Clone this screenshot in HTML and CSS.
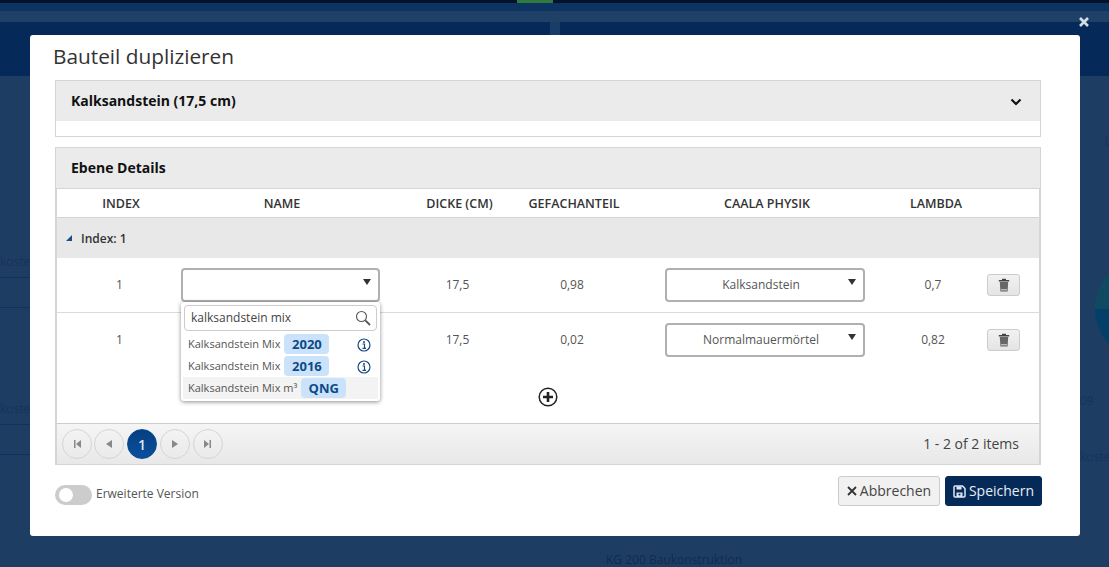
FILE: index.html
```html
<!DOCTYPE html>
<html lang="de">
<head>
<meta charset="utf-8">
<title>Bauteil duplizieren</title>
<link rel="stylesheet" href="styles.css">
</head>
<body>
<div class="backdrop">
  <div class="bar-top"><span class="green-tab"></span></div>
  <div class="bar-blue"></div>
  <div class="bar-light"></div>
  <div class="bar-header"><span class="header-strip"></span></div>
  <div class="back-body">
    <div class="back-left">
      <div class="ghost-text first">koste</div>
      <div class="ghost-line"></div>
      <div class="ghost-line second"></div>
      <div class="ghost-text third">koste</div>
      <div class="ghost-line fourth"></div>
      <div class="ghost-line second"></div>
    </div>
    <div class="back-main">KG 200 Baukonstruktion</div>
    <div class="back-right">
      <div class="ghost-l">L</div>
      <div class="ghost-circle"></div>
      <div class="ghost-text nine">09</div>
      <div class="ghost-text koster">koster</div>
    </div>
  </div>
</div>

<svg class="close-x" width="12" height="12" viewBox="0 0 12 12"><path d="M2 2l8 8M10 2l-8 8" stroke="#d5dde6" stroke-width="2.6" fill="none"/></svg>

<div class="modal">
  <h1 class="title">Bauteil duplizieren</h1>

  <section class="panel panel-first">
    <div class="panel-head">
      <span>Kalksandstein (17,5 cm)</span>
      <svg class="chevron" width="12" height="8" viewBox="0 0 12 8"><path d="M1.5 1.5L6 6l4.500-4.500" stroke="#111" stroke-width="2.200" fill="none"/></svg>
    </div>
  </section>

  <section class="panel panel-second">
    <div class="panel-head">
      <span>Ebene Details</span>
    </div>
    <div class="grid">
      <div class="row row-head">
        <div class="c-index">INDEX</div>
        <div class="c-name">NAME</div>
        <div class="c-dicke">DICKE (CM)</div>
        <div class="c-gef">GEFACHANTEIL</div>
        <div class="c-caala">CAALA PHYSIK</div>
        <div class="c-lambda">LAMBDA</div>
      </div>
      <div class="group-row">
        <svg class="group-arrow" width="6" height="6" viewBox="0 0 6 6"><path d="M6 0v6H0z" fill="#1d4f86"/></svg>
        <span>Index: 1</span>
      </div>
      <div class="row row-data row-border">
        <div class="c-index">1</div>
        <div class="c-name">
          <div class="select select-open"><span></span><i class="caret"></i></div>
          <div class="dropdown">
            <div class="search">
              <span>kalksandstein mix</span>
              <svg width="16" height="16" viewBox="0 0 16 16"><circle cx="6.500" cy="6.500" r="5" stroke="#555" stroke-width="1.100" fill="none"/><path d="M10.300 10.300L15 15" stroke="#555" stroke-width="1.800"/></svg>
            </div>
            <div class="option">
              <span class="opt-name">Kalksandstein Mix</span><span class="badge">2020</span>
              <svg class="info" width="14" height="14" viewBox="0 0 14 14"><circle cx="7" cy="7" r="6" stroke="#1b4a80" stroke-width="1.200" fill="none"/><circle cx="7" cy="4" r="1" fill="#1b4a80"/><path d="M5.500 6h2v4h1M5.500 10.300h3.500" stroke="#1b4a80" stroke-width="1.200" fill="none"/></svg>
            </div>
            <div class="option">
              <span class="opt-name">Kalksandstein Mix</span><span class="badge">2016</span>
              <svg class="info" width="14" height="14" viewBox="0 0 14 14"><circle cx="7" cy="7" r="6" stroke="#1b4a80" stroke-width="1.200" fill="none"/><circle cx="7" cy="4" r="1" fill="#1b4a80"/><path d="M5.500 6h2v4h1M5.500 10.300h3.500" stroke="#1b4a80" stroke-width="1.200" fill="none"/></svg>
            </div>
            <div class="option option-active">
              <span class="opt-name">Kalksandstein Mix m³</span><span class="badge">QNG</span>
            </div>
          </div>
        </div>
        <div class="c-dicke">17,5</div>
        <div class="c-gef">0,98</div>
        <div class="c-caala"><div class="select"><span>Kalksandstein</span><i class="caret"></i></div></div>
        <div class="c-lambda">0,7</div>
        <div class="c-act"><button class="trash"><svg width="12" height="14" viewBox="0 0 12 14"><path d="M4 1.500h4M.8 2.800h10.400" stroke="#444" stroke-width="1.400" fill="none"/><path d="M1.800 4h8.400l-.6 9.500H2.400z" fill="#666"/><path d="M3 11.800h6" stroke="#ddd" stroke-width="1"/></svg></button></div>
      </div>
      <div class="row row-data">
        <div class="c-index">1</div>
        <div class="c-name"></div>
        <div class="c-dicke">17,5</div>
        <div class="c-gef">0,02</div>
        <div class="c-caala"><div class="select"><span>Normalmauermörtel</span><i class="caret"></i></div></div>
        <div class="c-lambda">0,82</div>
        <div class="c-act"><button class="trash"><svg width="12" height="14" viewBox="0 0 12 14"><path d="M4 1.500h4M.8 2.800h10.400" stroke="#444" stroke-width="1.400" fill="none"/><path d="M1.800 4h8.400l-.6 9.500H2.400z" fill="#666"/><path d="M3 11.800h6" stroke="#ddd" stroke-width="1"/></svg></button></div>
      </div>
      <div class="add-row">
        <svg width="20" height="20" viewBox="0 0 20 20"><circle cx="10" cy="10" r="8.800" stroke="#222" stroke-width="1.500" fill="none"/><path d="M10 5v10M5 10h10" stroke="#222" stroke-width="2.600"/></svg>
      </div>
      <div class="pager">
        <div class="pager-btns">
          <span class="pg pg-first"><svg width="8" height="8" viewBox="0 0 8 8"><path d="M1 0h1.500v8H1zM8 0v8L3 4z" fill="#888"/></svg></span>
          <span class="pg"><svg width="6" height="8" viewBox="0 0 6 8"><path d="M6 0v8L0 4z" fill="#888"/></svg></span>
          <span class="pg pg-on">1</span>
          <span class="pg"><svg width="6" height="8" viewBox="0 0 6 8"><path d="M0 0v8l6-4z" fill="#888"/></svg></span>
          <span class="pg"><svg width="8" height="8" viewBox="0 0 8 8"><path d="M0 0v8l5-4zM5.500 0H7v8H5.500z" fill="#888"/></svg></span>
        </div>
        <div class="pager-info">1 - 2 of 2 items</div>
      </div>
    </div>
  </section>

  <div class="modal-foot">
    <div class="toggle-wrap">
      <span class="toggle"><span class="knob"></span></span>
      <span class="toggle-label">Erweiterte Version</span>
    </div>
    <div class="actions">
      <button class="btn btn-cancel"><svg width="10" height="10" viewBox="0 0 10 10"><path d="M1 1l8 8M9 1l-8 8" stroke="#333" stroke-width="1.800" fill="none"/></svg>Abbrechen</button>
      <button class="btn btn-save"><svg width="13" height="13" viewBox="0 0 13 13"><path d="M1 2a1 1 0 0 1 1-1h7.500L12 3.500V11a1 1 0 0 1-1 1H2a1 1 0 0 1-1-1z" fill="none" stroke="#dfe8f2" stroke-width="1.500"/><path d="M3.500 1.500h5v3h-5zM3.500 7.500h6V12h-6z" fill="#dfe8f2"/><circle cx="6.500" cy="9.500" r="1.100" fill="#062a57"/></svg>Speichern</button>
    </div>
  </div>
</div>
</body>
</html>
```
FILE: styles.css
```css
* { box-sizing: border-box; }
html, body { margin: 0; padding: 0; height: 100%; }
body {
  width: 1109px;
  height: 567px;
  overflow: hidden;
  position: relative;
  background: #1e3d63;
  font-family: "Open Sans", "Noto Sans", sans-serif;
  color: #444;
}

/* dimmed page behind the dialog */
.backdrop { height: 567px; display: flex; flex-direction: column; }
.bar-top { height: 3px; background: #03122c; display: flex; padding-left: 517px; flex: none; }
.green-tab { width: 36px; height: 4px; background: #2f7a3c; }
.bar-blue { height: 8px; background: #0d3360; flex: none; }
.bar-light { height: 11px; background: #1f4067; flex: none; }
.bar-header { height: 54px; background: #052a59; flex: none; padding-left: 550px; }
.header-strip { display: block; width: 10px; height: 13px; background: #1a3c68; }
.back-body { flex: 1; display: flex; border-bottom: 2px solid #56616e; }
.back-left { width: 30px; padding-top: 178px; }
.back-main { flex: 1; padding: 476px 0 0 576px; font-size: 12px; line-height: 16px; color: #0f2c50; white-space: nowrap; }
.back-right { width: 29px; overflow: hidden; padding-top: 54px; }
.ghost-text { font-size: 12px; line-height: 16px; color: #15345a; white-space: nowrap; }
.ghost-line { height: 1px; background: #15315a; margin-top: 7px; }
.ghost-line.second { margin-top: 29px; }
.ghost-text.third { margin-top: 93px; }
.ghost-line.fourth { margin-top: 7px; }
.ghost-l { font-size: 15px; line-height: 20px; color: #163658; padding-left: 24px; }
.ghost-circle {
  width: 104px;
  height: 104px;
  border-radius: 50%;
  margin: 107px 0 0 15px;
  background: linear-gradient(#0f4a62 50%, #033f66 50%);
}
.ghost-text.nine { margin-top: 32px; }
.ghost-text.koster { margin-top: 40px; }

.close-x { position: absolute; left: 1078px; top: 16px; }

/* dialog */
.modal {
  position: absolute;
  left: 30px;
  top: 35px;
  width: 1050px;
  height: 501px;
  background: #fff;
  border-radius: 3px;
  padding: 0 38px 0 25px;
  display: flex;
  flex-direction: column;
}
.title {
  margin: 8px 0 10px -2px;
  font-size: 20.800px;
  line-height: 27px;
  font-weight: 400;
  color: #333;
}
.panel { border: 1px solid #d5d5d5; background: #fff; width: 986px; flex: none; }
.panel-first { height: 57px; margin-bottom: 10px; }
.panel-second { height: 318px; }
.panel-head {
  height: 40px;
  background: #ebebeb;
  display: flex;
  align-items: center;
  justify-content: space-between;
  padding: 0 18px 2px 15px;
  font-size: 14px;
  font-weight: 700;
  color: #111;
}
.chevron { flex: none; margin-top: 3px; }

/* grid */
.grid {
  background: #fff;
  border: 1px solid #d5d5d5;
  border-bottom: 0;
  height: 276px;
  display: flex;
  flex-direction: column;
}
.row { display: flex; align-items: center; font-size: 12px; color: #555; }
.c-index { width: 124px; padding-left: 1px; text-align: center; }
.c-name { width: 199px; text-align: center; position: relative; }
.c-dicke { width: 156px; padding-right: 1px; text-align: center; }
.c-gef { width: 72px; margin-right: 57px; text-align: center; white-space: nowrap; }
.c-caala { width: 200px; text-align: center; }
.c-lambda { width: 122px; padding-left: 14px; text-align: center; }
.c-act { width: 33px; }
.row-head { height: 29px; flex: none; font-size: 12.500px; font-weight: 600; color: #333; border-bottom: 1px solid #d5d5d5; }
.row-head > div { padding-left: 4px; }
.row-head .c-name { padding-left: 3px; }
.row-head .c-gef { padding-left: 0; margin-left: -8px; margin-right: 45px; width: 92px; }
.row-head .c-lambda { padding-left: 20px; }
.group-row {
  height: 40px;
  flex: none;
  background: #e9e8e9;
  display: flex;
  align-items: center;
  font-size: 12px;
  font-weight: 600;
  color: #333;
  padding-left: 9px;
  gap: 9px;
}
.row-data { height: 55px; flex: none; padding-bottom: 2px; }
.row-border { border-bottom: 1px solid #dcdcdc; padding-bottom: 1px; }
.select {
  height: 34px;
  border: 2px solid #b0b0b0;
  border-radius: 4px;
  background: #fff;
  display: flex;
  align-items: center;
  justify-content: center;
  font-size: 12px;
  position: relative;
  padding: 0 8px 1px 0;
}
.caret {
  position: absolute;
  right: 7px;
  top: 9px;
  width: 0;
  height: 0;
  border-left: 4px solid transparent;
  border-right: 4px solid transparent;
  border-top: 6px solid #333;
}
.dropdown {
  position: absolute;
  left: 0;
  top: 34px;
  width: 199px;
  height: 99px;
  background: #fff;
  border-radius: 3px;
  box-shadow: 0 1px 4px rgba(0,0,0,.45);
  padding: 3px 2px;
  z-index: 2;
  text-align: left;
}
.search {
  height: 26px;
  margin: 0 1px 2px;
  border: 1px solid #ccc;
  border-radius: 4px;
  display: flex;
  align-items: center;
  justify-content: space-between;
  padding: 0 5px 0 6px;
  font-size: 12px;
  color: #444;
}
.option {
  height: 22px;
  display: flex;
  align-items: center;
  padding-left: 5px;
  font-size: 11px;
  color: #555;
  position: relative;
}
.option-active { background: #f3f3f3; }
.opt-name { white-space: nowrap; }
.badge {
  margin-left: 4px;
  width: 45px;
  height: 20px;
  border-radius: 4px;
  background: #cbe3fa;
  color: #0d4a8a;
  font-size: 13px;
  font-weight: 700;
  text-align: center;
  line-height: 20px;
}
.info { position: absolute; right: 7px; top: 5px; }
.trash {
  width: 33px;
  height: 22px;
  padding: 0;
  border: 1px solid #ccc;
  border-radius: 3px;
  background: linear-gradient(#f2f2f2, #e4e4e4);
  display: flex;
  align-items: center;
  justify-content: center;
}
.add-row { flex: 1; display: flex; align-items: flex-end; justify-content: center; padding-bottom: 16px; padding-right: 1px; }
.pager {
  height: 41px;
  flex: none;
  border-top: 1px solid #ccc;
  background: linear-gradient(#f5f5f5, #e8e8e8);
  display: flex;
  align-items: center;
  justify-content: space-between;
  padding: 0 20px 0 5px;
}
.pager-btns { display: flex; gap: 3px; }
.pg {
  width: 30px;
  height: 30px;
  border: 1px solid #d5d5d5;
  border-radius: 50%;
  display: flex;
  align-items: center;
  justify-content: center;
}
.pg-first { margin-right: -1px; }
.pg-on {
  background: linear-gradient(#053f80, #0a4f9c);
  border-color: #064a94;
  color: #dfe8f2;
  font-size: 14px;
  font-weight: 600;
}
.pager-info { font-size: 14px; color: #444; padding-bottom: 2px; }

/* footer */
.modal-foot { display: flex; justify-content: space-between; align-items: flex-start; margin-top: 11px; width: 987px; }
.toggle-wrap { display: flex; align-items: center; gap: 4px; margin-top: 9px; }
.toggle { width: 37px; height: 20px; border-radius: 10px; background: #ccc; padding: 3px 4px; display: block; }
.knob { display: block; width: 14px; height: 14px; border-radius: 50%; background: #fff; }
.toggle-label { font-size: 12px; color: #555; padding-bottom: 3px; }
.actions { display: flex; gap: 5px; }
.btn {
  height: 30px;
  border-radius: 3px;
  font-family: inherit;
  font-size: 14px;
  padding: 0 0 2px;
  display: flex;
  align-items: center;
  justify-content: center;
  gap: 3px;
}
.btn svg { margin-top: 2px; }
.btn-cancel { width: 102px; border: 1px solid #ccc; background: #f1f1f1; color: #444; }
.btn-save { width: 97px; border: 1px solid #062a57; background: #062a57; color: #e6eef6; font-weight: 500; }
```
